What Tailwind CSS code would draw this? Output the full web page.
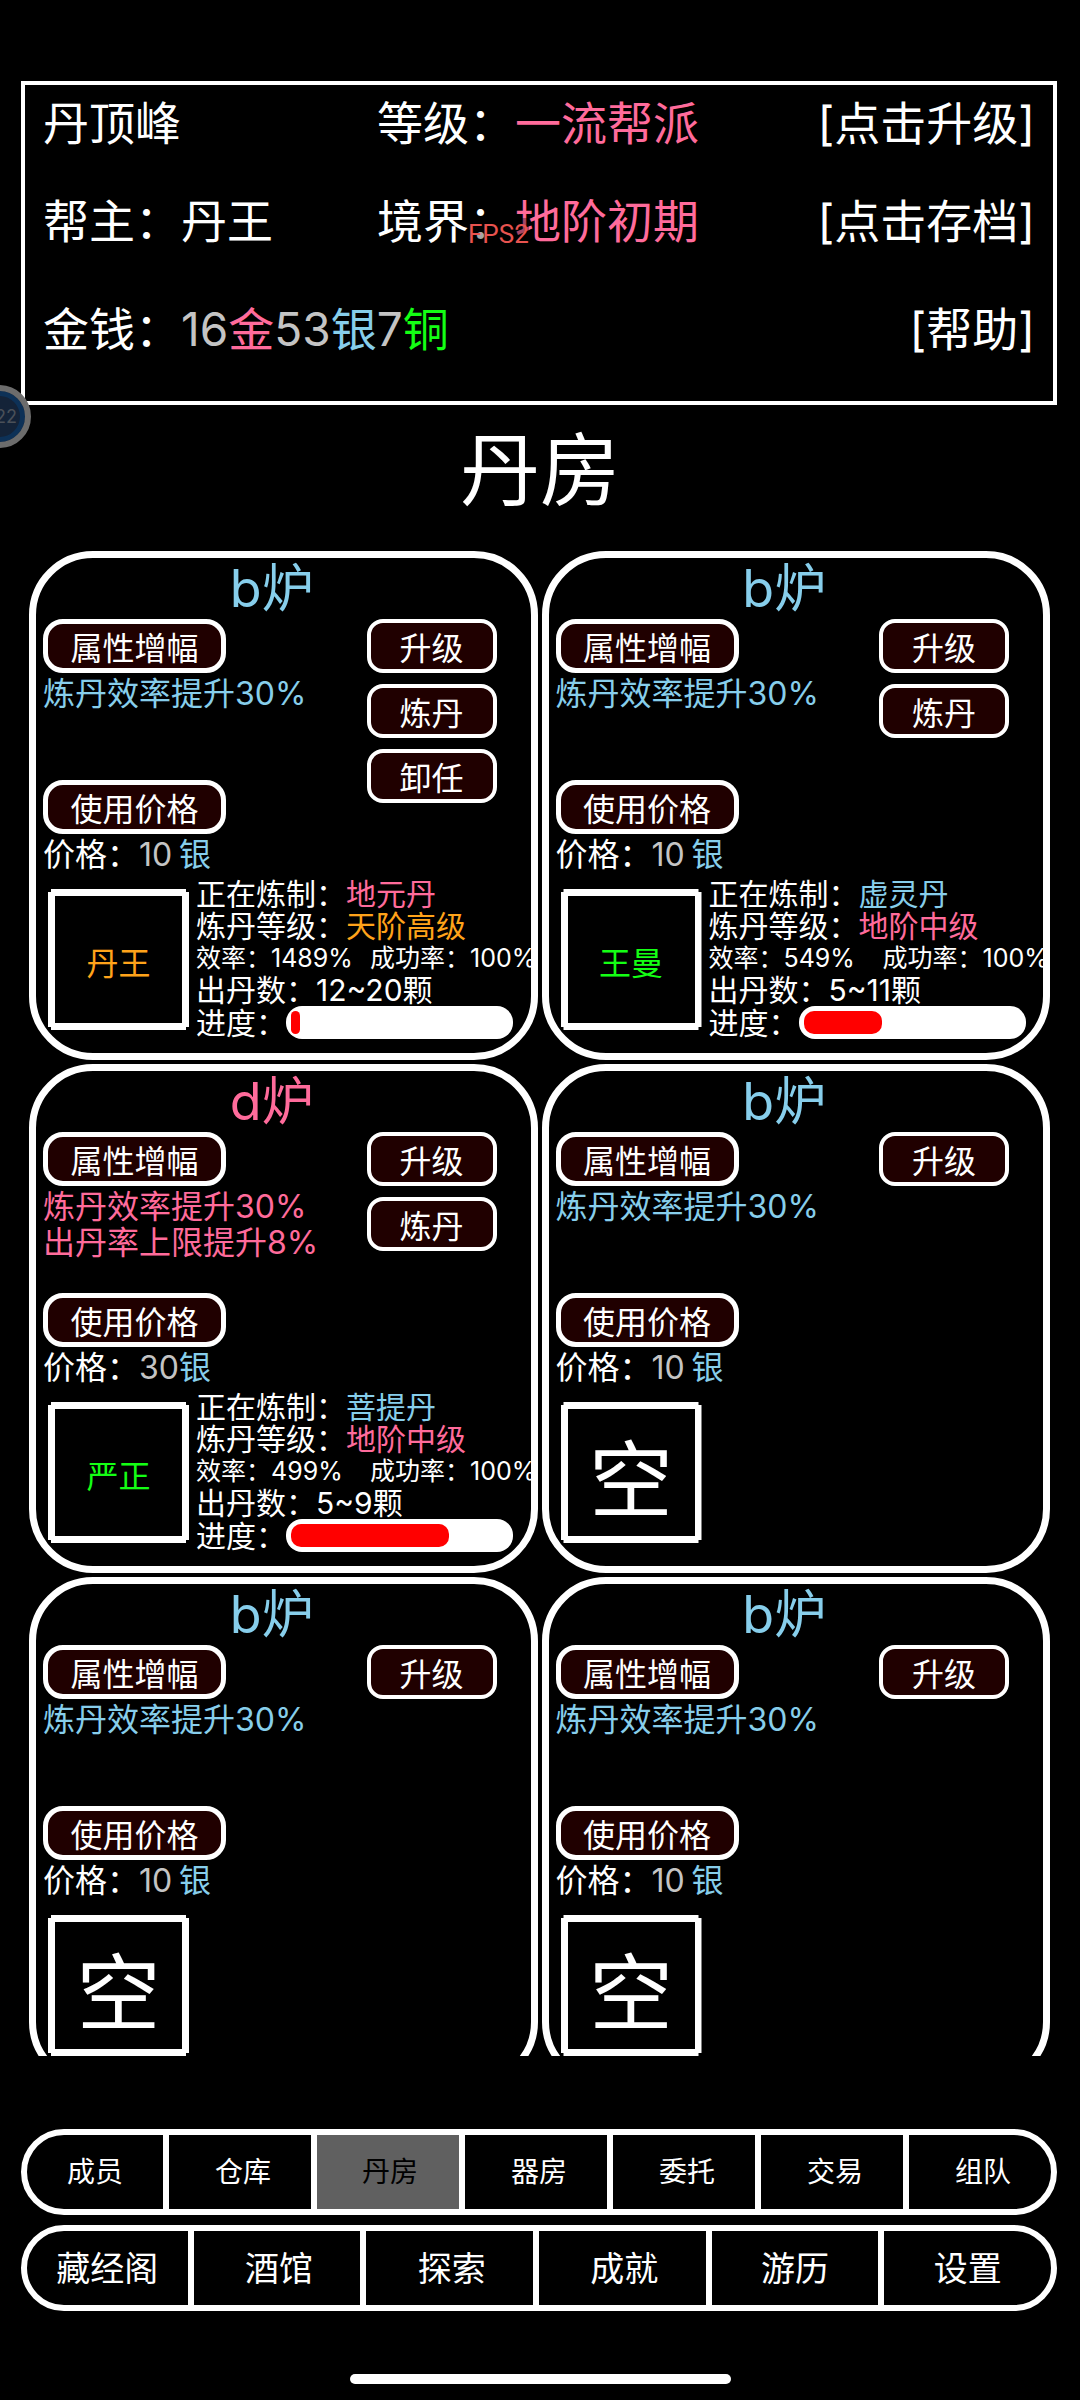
<!DOCTYPE html>
<html lang="zh-CN">
<head>
    <meta charset="UTF-8">
    <meta name="viewport" content="width=device-width, initial-scale=1.0">
    <title>丹房</title>
    <script src="https://cdn.jsdelivr.net/npm/@tailwindcss/browser@4"></script>
</head>
<body class="bg-black text-white font-['Inter','Noto_Sans_CJK_SC',sans-serif]">
    <div class="relative flex flex-col h-screen overflow-hidden">

        <!-- Sect summary -->
        <header class="mt-[81px] ml-[21px] mr-[23px] border-4 border-white px-[18px] pb-6 text-[46px] whitespace-nowrap">
            <div class="grid grid-cols-[334px_1fr_auto] items-center h-[76px]">
                <span>丹顶峰</span>
                <span>等级：<span class="text-[#ff6b9b]">一流帮派</span></span>
                <button type="button">[点击升级]</button>
            </div>
            <div class="grid grid-cols-[334px_1fr_auto] items-center h-[120px]">
                <span>帮主：丹王</span>
                <span>境界：<span class="text-[#ff6b9b]">地阶初期</span></span>
                <button type="button">[点击存档]</button>
            </div>
            <div class="flex items-center justify-between h-[96px]">
                <span>金钱：<span class="text-[#c4c4c4]">16<span class="text-[#ff6b9b]">金</span>53<span class="text-[#87ceeb]">银</span>7<span class="text-[#14ff14]">铜</span></span></span>
                <button type="button">[帮助]</button>
            </div>
        </header>

        <!-- Frame counter -->
        <div class="absolute left-[468px] top-[218px] bg-black/35 text-[#e8534f] text-[26px] leading-[32px] font-['Roboto',sans-serif]">FPS2</div>

        <!-- Floating helper ball -->
        <div class="absolute -left-[32px] top-[385px] flex items-center justify-end size-[63px] rounded-full border-[6px] border-[#6c6c6c] bg-[#142338] inset-shadow-[0_0_0_5px_#0d3157] pr-2 text-[18px] text-[#4a5058]">22</div>

        <h1 class="mb-4 text-center text-[80px] leading-[130px]">丹房</h1>

        <!-- Furnace list -->
        <main id="furnaces" class="flex-1 min-h-0 overflow-y-auto [scrollbar-width:none] grid grid-cols-2 content-start gap-1 pl-[29px] pr-[30px]"></main>

        <!-- Bottom navigation -->
        <nav class="mt-[73px] ml-[21px] mr-[23px] flex flex-col gap-[10px]">
            <div class="h-[86px] overflow-hidden rounded-full border-[6px] border-white text-[28px]">
                <div class="grid grid-cols-7 h-full -mx-[6px] divide-x-[6px] divide-white">
                    <button type="button" class="pl-[6px]">成员</button>
                    <button type="button" class="pl-[6px]">仓库</button>
                    <button type="button" class="pl-1 bg-[#606060] text-black" aria-current="page">丹房</button>
                    <button type="button" class="pl-[6px]">器房</button>
                    <button type="button" class="pl-[6px]">委托</button>
                    <button type="button" class="pl-[6px]">交易</button>
                    <button type="button" class="px-[6px]">组队</button>
                </div>
            </div>
            <div class="h-[86px] overflow-hidden rounded-full border-[6px] border-white text-[34px]">
                <div class="grid grid-cols-6 h-full -mx-[6px] divide-x-[6px] divide-white">
                    <button type="button" class="pl-[6px]">藏经阁</button>
                    <button type="button" class="pl-1">酒馆</button>
                    <button type="button" class="pl-1">探索</button>
                    <button type="button" class="pl-1">成就</button>
                    <button type="button">游历</button>
                    <button type="button" class="pr-[6px]">设置</button>
                </div>
            </div>
        </nav>

        <div class="mt-[63px] mb-4 mx-auto w-[381px] h-[10px] shrink-0 rounded-full bg-white"></div>
    </div>

    <script>
        const BLUE = 'text-[#87ceeb]';
        const PINK = 'text-[#ff6b9b]';
        const ORANGE = 'text-[#ffa31a]';
        const GREEN = 'text-[#14ff14]';

        const furnaces = [
            {
                name: 'b炉', color: BLUE, buffs: ['炼丹效率提升30%'], price: 10, actions: ['升级', '炼丹', '卸任'],
                worker: { name: '丹王', color: ORANGE, pill: '地元丹', pillColor: PINK, level: '天阶高级', levelColor: ORANGE, rate: 1489, success: 100, yield: '12~20', progress: 4 }
            },
            {
                name: 'b炉', color: BLUE, buffs: ['炼丹效率提升30%'], price: 10, actions: ['升级', '炼丹'],
                worker: { name: '王曼', color: GREEN, pill: '虚灵丹', pillColor: BLUE, level: '地阶中级', levelColor: PINK, rate: 549, success: 100, yield: '5~11', progress: 36 }
            },
            {
                name: 'd炉', color: PINK, buffs: ['炼丹效率提升30%', '出丹率上限提升8%'], price: 30, actions: ['升级', '炼丹'],
                worker: { name: '严正', color: GREEN, pill: '菩提丹', pillColor: BLUE, level: '地阶中级', levelColor: PINK, rate: 499, success: 100, yield: '5~9', progress: 73 }
            },
            { name: 'b炉', color: BLUE, buffs: ['炼丹效率提升30%'], price: 10, actions: ['升级'] },
            { name: 'b炉', color: BLUE, buffs: ['炼丹效率提升30%'], price: 10, actions: ['升级'] },
            { name: 'b炉', color: BLUE, buffs: ['炼丹效率提升30%'], price: 10, actions: ['升级'] }
        ];

        const tagClass = 'block w-[183px] h-[54px] rounded-[20px] border-[5px] border-white bg-[#200000] pt-1.5 text-center';
        const actionClass = 'block w-[130px] h-[54px] rounded-2xl border-4 border-white bg-[#200000] pt-1.5 text-center';
        // Square frame with its corners notched
        const frameClass = 'flex shrink-0 items-center justify-center mt-[11px] ml-[5px] size-[141px] border-[7px] border-white [clip-path:polygon(3px_0,138px_0,138px_3px,141px_3px,141px_138px,138px_138px,138px_141px,3px_141px,3px_138px,0_138px,0_3px,3px_3px)]';

        function workerInfo(w) {
            return `
                <div class="ml-[7px] text-[30px] leading-[32px]">
                    <p>正在炼制：<span class="${w.pillColor}">${w.pill}</span></p>
                    <p>炼丹等级：<span class="${w.levelColor}">${w.level}</span></p>
                    <p class="flex text-[25px] leading-[32px]"><span class="w-[174px]">效率：${w.rate}%</span><span>成功率：${w.success}%</span></p>
                    <p>出丹数：${w.yield}颗</p>
                    <div class="flex items-center">
                        <span>进度：</span>
                        <div class="w-[227px] h-[33px] rounded-2xl bg-white p-[5px]" role="progressbar" aria-label="进度" aria-valuenow="${w.progress}" aria-valuemin="0" aria-valuemax="100">
                            <div class="h-full rounded-[10px] bg-[#ff0000]" style="width: ${w.progress}%"></div>
                        </div>
                    </div>
                </div>`;
        }

        function furnaceCard(f) {
            return `
                <section class="h-[509px] rounded-[64px] border-[7px] border-white pl-[7px] text-[32px] leading-[36px] whitespace-nowrap">
                    <h2 class="pr-[30px] text-center text-[52px] leading-[61px] ${f.color}">${f.name}</h2>
                    <div class="flex justify-between pr-[34px]">
                        <div>
                            <button type="button" class="${tagClass}">属性增幅</button>
                            <div class="h-[107px] pt-[3px] ${f.color}">${f.buffs.map(b => `<p>${b}</p>`).join('')}</div>
                            <button type="button" class="${tagClass}">使用价格</button>
                            <p class="pt-[3px]">价格：<span class="inline-block min-w-10 text-[#c4c4c4]">${f.price}</span><span class="text-[#87ceeb]">银</span></p>
                        </div>
                        <div class="flex flex-col gap-[11px]">${f.actions.map(a => `<button type="button" class="${actionClass}">${a}</button>`).join('')}</div>
                    </div>
                    <div class="flex items-start pt-[5px]">
                        ${f.worker
                            ? `<div class="${frameClass} pt-2 ${f.worker.color}">${f.worker.name}</div>${workerInfo(f.worker)}`
                            : `<div class="${frameClass} pt-4 text-[84px]">空</div>`}
                    </div>
                </section>`;
        }

        document.getElementById('furnaces').innerHTML = furnaces.map(furnaceCard).join('');
    </script>
</body>
</html>
